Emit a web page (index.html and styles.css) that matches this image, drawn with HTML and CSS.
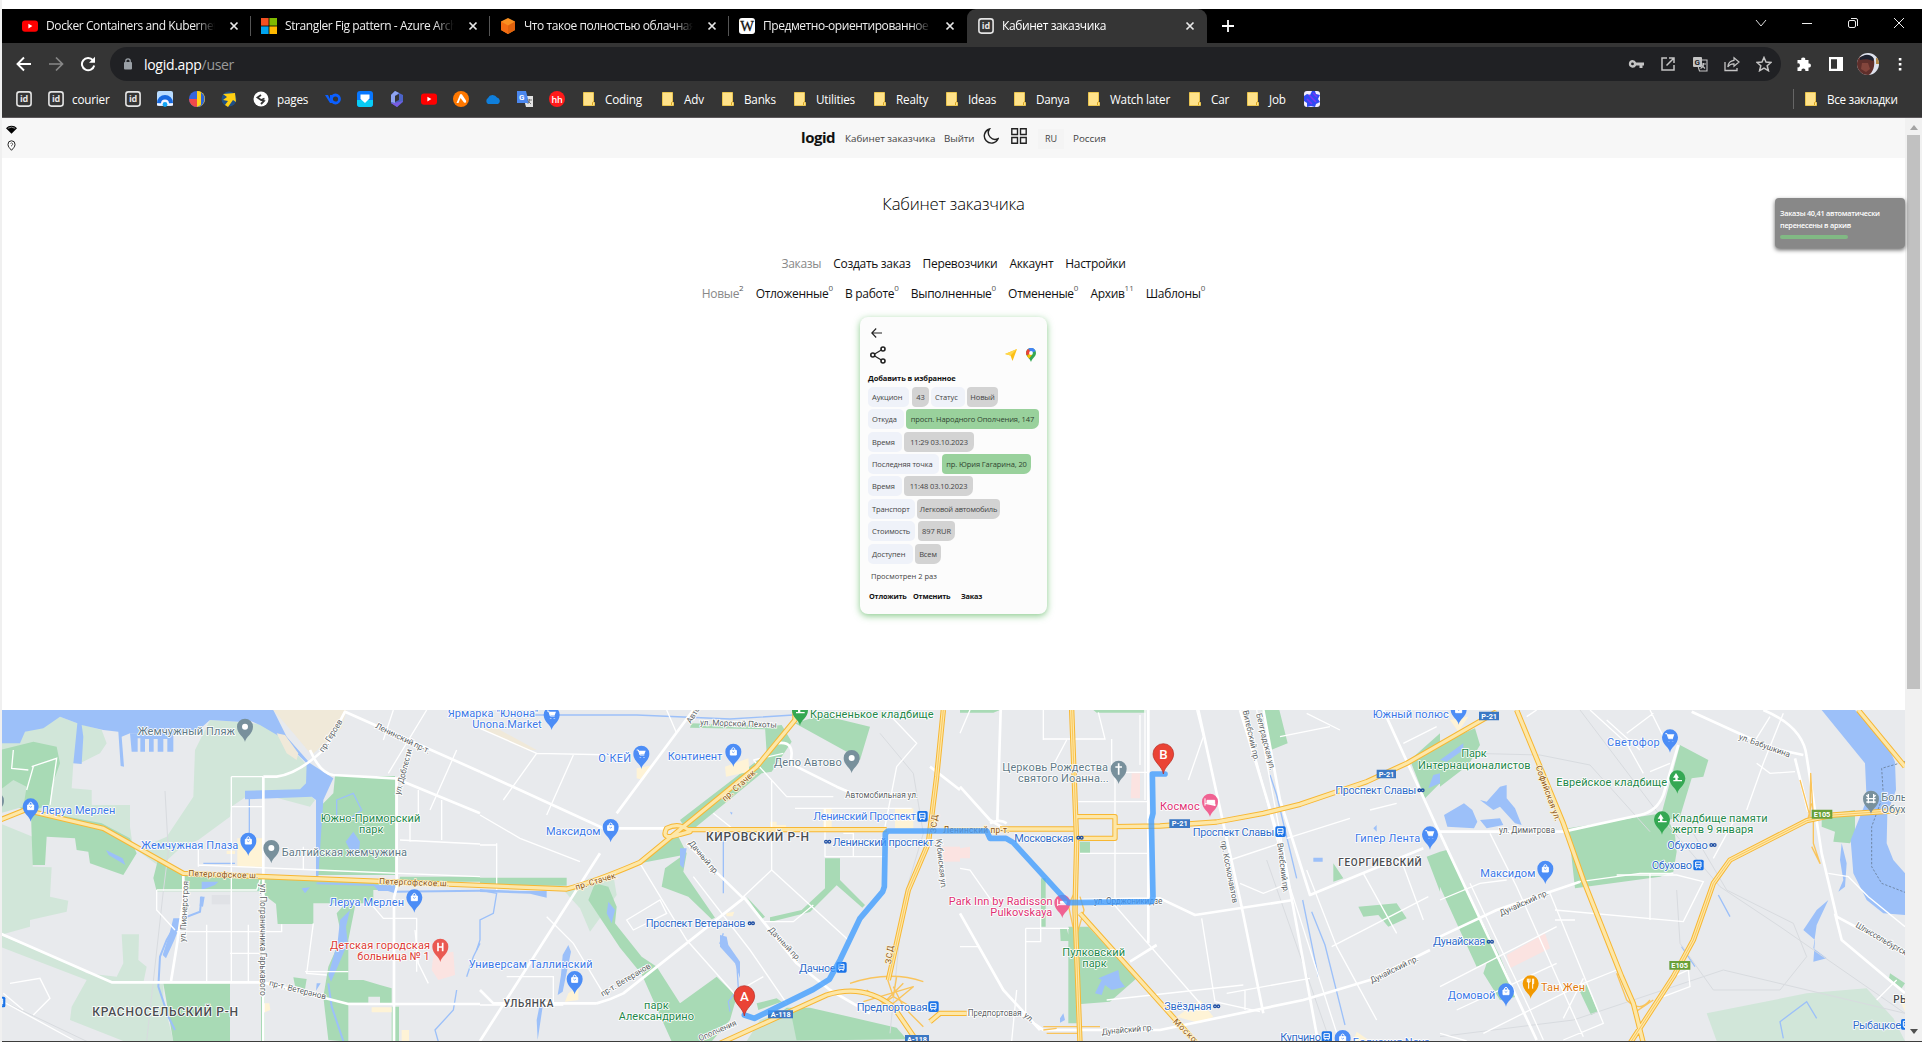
FILE: index.html
```html
<!DOCTYPE html>
<html lang="ru">
<head>
<meta charset="utf-8">
<title>Кабинет заказчика</title>
<link rel="stylesheet" href="styles.css">
</head>
<body>
<svg class="defs" aria-hidden="true">
  <defs>
    <symbol id="close" viewBox="0 0 10 10"><path d="M1.5 1.5l7 7M8.5 1.5l-7 7" stroke="#e8e8e8" stroke-width="1.7"/></symbol>
    <symbol id="idicon" viewBox="0 0 16 16"><rect x=".9" y=".9" width="14.2" height="14.2" rx="2.5" fill="none" stroke="#e4e4e4" stroke-width="1.6"/><text x="8" y="11.4" text-anchor="middle" font-family="Open Sans" font-weight="700" font-size="9" fill="#e4e4e4">id</text></symbol>
    <symbol id="folder" viewBox="0 0 12 14"><path d="M.5.5h10v9l1 1v3H.5z" fill="#ffe28a" stroke="#eac54f"/><path d="M9.5 13v-2.5l1.5-1" stroke="#d9a520" fill="none"/></symbol>
    <symbol id="yt" viewBox="0 0 16 16"><rect y="2.4" width="16" height="11.4" rx="3" fill="#f00"/><path d="M6.4 5.7v4.8l4-2.4z" fill="#fff"/></symbol>
  </defs>
</svg>

<div class="window">
<div class="tabs">
  <div class="tab"><svg class="fav"><use href="#yt"/></svg><span class="tab-title">Docker Containers and Kubernetes</span><svg class="x"><use href="#close"/></svg></div>
  <div class="tab"><svg class="fav" viewBox="0 0 16 16"><path fill="#f25022" d="M0 0h7.6v7.6H0z"/><path fill="#7fba00" d="M8.4 0H16v7.6H8.4z"/><path fill="#00a4ef" d="M0 8.4h7.6V16H0z"/><path fill="#ffb900" d="M8.4 8.4H16V16H8.4z"/></svg><span class="tab-title">Strangler Fig pattern - Azure Architecture</span><svg class="x"><use href="#close"/></svg></div>
  <div class="tab"><svg class="fav" viewBox="0 0 16 16"><path fill="#f98f20" d="M8 0l7 3.600v8.400L8 16l-7-4V3.600z"/><path fill="#f36c12" d="M1 3.600L8 7.500V16l-7-4z"/><path fill="#e0620d" d="M15 3.600L8 7.500V16l7-4z"/></svg><span class="tab-title tight">Что такое полностью облачная среда</span><svg class="x"><use href="#close"/></svg></div>
  <div class="tab last"><svg class="fav" viewBox="0 0 16 16"><rect width="16" height="16" rx="3" fill="#fff"/><text x="8" y="12.500" text-anchor="middle" font-family="Liberation Serif" font-size="14.500" fill="#111" stroke="#111" stroke-width=".3">W</text></svg><span class="tab-title tight">Предметно-ориентированное проектирование</span><svg class="x"><use href="#close"/></svg></div>
  <div class="tab active"><svg class="fav"><use href="#idicon"/></svg><span class="tab-title">Кабинет заказчика</span><svg class="x"><use href="#close"/></svg></div>
  <svg class="plus" viewBox="0 0 12 12"><path d="M6 0v12M0 6h12" stroke="#fff" stroke-width="1.800"/></svg>
  <div class="winctl">
    <svg viewBox="0 0 12 12"><path d="M1 3l5 6 5-6" fill="none" stroke="#ddd"/></svg>
    <svg viewBox="0 0 12 12"><path d="M1 6.500h10" stroke="#eee"/></svg>
    <svg viewBox="0 0 12 12"><rect x="1.500" y="3.500" width="7" height="7" rx="1.500" fill="none" stroke="#eee"/><path d="M4 1.500h5a1.500 1.500 0 0 1 1.500 1.500v6" fill="none" stroke="#eee"/></svg>
    <svg viewBox="0 0 12 12"><path d="M1 1l10 10M11 1L1 11" stroke="#eee"/></svg>
  </div>
</div>

<div class="toolbar">
  <div class="navbtns">
    <svg viewBox="0 0 16 16"><path d="M8 1.500L1.500 8 8 14.500M1.800 8H15" fill="none" stroke="#fff" stroke-width="1.900"/></svg>
    <svg viewBox="0 0 16 16"><path d="M8 1.500L14.500 8 8 14.500M14.200 8H1" fill="none" stroke="#888" stroke-width="1.700"/></svg>
    <svg viewBox="0 0 16 16"><path d="M12.900 4.100A6.200 6.200 0 1 0 14.200 9.500" fill="none" stroke="#fff" stroke-width="2"/><path d="M15 .8v6H9z" fill="#fff"/></svg>
  </div>
  <div class="omnibox">
    <svg class="lock" viewBox="0 0 8 12"><rect y="4" width="8" height="7.500" rx="1" fill="#9aa0a6"/><path d="M1.800 5V3a2.200 2.200 0 0 1 4.400 0v2" fill="none" stroke="#9aa0a6" stroke-width="1.300"/></svg>
    <span class="url">logid.app<i>/user</i></span>
    <div class="actions">
      <svg viewBox="0 0 16 16"><path fill="#c4c4c4" fill-rule="evenodd" d="M4.500 4a3.800 3.800 0 0 1 3.600 2.600H16v2.800h-1.500V12h-3V9.400H8.100A3.800 3.800 0 1 1 4.500 4zm0 2.500a1.400 1.400 0 1 0 0 2.800 1.400 1.400 0 0 0 0-2.800z"/></svg>
      <svg viewBox="0 0 16 16"><path d="M7 2H2v12h12V9M9 2h5v5M14 2L6.500 9.500" fill="none" stroke="#c4c4c4" stroke-width="1.500"/></svg>
      <svg viewBox="0 0 16 16"><rect x="1" y="1" width="9" height="10" rx="1" fill="#c4c4c4"/><path d="M10 4h5v11H7.500l-1.300-4M9 8h5M11.500 7v1c0 2-2 4-3 4.500M10 9.500l3 3" fill="none" stroke="#c4c4c4" stroke-width="1.100"/><text x="2.600" y="9" font-family="Roboto" font-weight="700" font-size="8" fill="#202124">G</text></svg>
      <svg viewBox="0 0 16 16"><path d="M1 6v8.500h12V12" fill="none" stroke="#c4c4c4" stroke-width="1.300"/><path d="M10 1.800L15 6l-5 4.200V7.800C7 7.700 5 8.800 3.800 11 4 7.500 6 4.800 10 4.300z" fill="none" stroke="#c4c4c4" stroke-width="1.200"/></svg>
      <svg viewBox="0 0 16 16"><path d="M8 1.500l2 4.600 5 .4-3.800 3.300 1.200 4.900L8 12.100l-4.400 2.600 1.200-4.900L1 6.500l5-.4z" fill="none" stroke="#c4c4c4" stroke-width="1.500"/></svg>
    </div>
  </div>
  <div class="ext">
    <svg viewBox="0 0 16 16"><path fill="#fff" d="M2 4h3.300a2 2 0 1 1 3.900 0H12.500v3.600a2 2 0 1 1 0 3.900V15H9.300a2 2 0 1 0-3.800 0H1.500v-3.700a2 2 0 1 0 0-3.900V4z"/></svg>
    <svg viewBox="0 0 16 16"><path fill="#fff" fill-rule="evenodd" d="M1 1h14v14H1zM3 3.200v9.600h6V3.200z"/></svg>
    <svg class="avatar" viewBox="0 0 22 22"><clipPath id="av"><circle cx="11" cy="11" r="11"/></clipPath><g clip-path="url(#av)"><path fill="#dfe3ee" d="M0 0h22v22H0z"/><path fill="#b48a4a" d="M19 5h3v6h-3z"/><path fill="#5f2f2b" d="M0 6c4-4 14-4 17 1 1 6-1 12-5 15H0z"/><path fill="#1e2230" d="M3 5c3-4 11-5 14 1l-1 2c-4-2-9-2-13-1z"/><path fill="#83453c" d="M5 10h6l2 6-4 3-5-3z"/></g></svg>
    <svg viewBox="0 0 16 16"><path fill="#fff" d="M6.800 2h2.600v2.600H6.800zM6.800 7h2.600v2.600H6.800zM6.800 12h2.600v2.600H6.800z"/></svg>
  </div>
</div>

<div class="bookmarks">
  <div><svg class="fav"><use href="#idicon"/></svg></div>
  <div><svg class="fav"><use href="#idicon"/></svg>courier</div>
  <div><svg class="fav"><use href="#idicon"/></svg></div>
  <div><svg class="fav" viewBox="0 0 16 16"><rect width="16" height="15" rx="2" fill="#b9dcff"/><path d="M0 12a8 8 0 0 1 16 0l-5 .5a3 3 0 0 0-6 0z" fill="#1769e0"/><path d="M8 8.500a4 4 0 0 1 4 4h4v2H0v-2h4a4 4 0 0 1 4-4z" fill="#f4f4ff"/><circle cx="8" cy="13.500" r="2.400" fill="#12a5f4"/></svg></div>
  <div><svg class="fav" viewBox="0 0 16 16"><circle cx="8" cy="8" r="8" fill="#3565dc"/><path d="M8 0a8 8 0 0 1 0 16z" fill="#ffd21a"/><path d="M12 1.500A8 8 0 0 1 8 16V9z" fill="#2b63d8"/><path d="M0 8h8v8A8 8 0 0 1 0 8z" fill="#f0494a"/><path d="M8 0v16l4-2V1z" fill="#ffd21a"/></svg></div>
  <div><svg class="fav" viewBox="0 0 16 16"><circle cx="8" cy="8" r="7.500" fill="#1f4f86"/><path d="M2 3l12-1 1 9-3-2-5 7-3-2 3-4-5-1 4-3z" fill="#ffd012"/></svg></div>
  <div><svg class="fav" viewBox="0 0 16 16"><circle cx="8" cy="8" r="7.500" fill="#fff"/><path d="M8 4L4.500 6.500 8 9l3.500-1.500M8 9l3 1-3 3" stroke="#333" stroke-width="1.800" fill="none"/></svg>pages</div>
  <div><svg class="fav" viewBox="0 0 16 16"><path d="M0 4h3l2 4V4h2v8H5z" fill="#0b5fff"/><circle cx="10.500" cy="8" r="4" fill="none" stroke="#0b5fff" stroke-width="2.800"/></svg></div>
  <div><svg class="fav" viewBox="0 0 16 16"><rect width="16" height="16" rx="3" fill="#0877ff"/><path d="M0 9h16v4a3 3 0 0 1-3 3H3a3 3 0 0 1-3-3z" fill="#08cdf5"/><path d="M3.500 3.500h9v4L8 12 3.500 8z" fill="#fff"/></svg></div>
  <div><svg class="fav" viewBox="0 0 16 16"><path d="M6 0l8 4v7l-6 5-6-4V4z" fill="#4b63c8"/><path d="M6 0l4 2-4 3v7l-4-1V4z" fill="#8fa4f0"/><path d="M6 12l8-2-6 6-6-4z" fill="#7a5be0"/><path d="M6 5l4-2v6l-4 2z" fill="#353535"/></svg></div>
  <div><svg class="fav"><use href="#yt"/></svg></div>
  <div><svg class="fav" viewBox="0 0 16 16"><circle cx="8" cy="8" r="8" fill="#ff7800"/><path d="M3.500 12L7 3.500q1-1 2 0l4 6q1 3-2 2L7.500 7 5.500 12z" fill="#fff"/></svg></div>
  <div><svg class="fav" viewBox="0 0 16 16"><path d="M3 13a3.500 3.500 0 0 1 0-6 5 5 0 0 1 9-.5A3.500 3.500 0 0 1 13 13z" fill="#0f7fdc"/></svg></div>
  <div><svg class="fav" viewBox="0 0 16 16"><path d="M6 5h10v11H9z" fill="#e3e3e3"/><path d="M0 0h9l3 12H0z" fill="#4b87ee"/><text x="2" y="9" font-family="Roboto" font-size="8" font-weight="700" fill="#fff">G</text><path d="M10 9h5M12.500 8c0 3-1 4-2 5M11 10l3 3" stroke="#777" fill="none"/></svg></div>
  <div><svg class="fav" viewBox="0 0 16 16"><circle cx="8" cy="8" r="8" fill="#ff1a1a"/><text x="8" y="11.500" text-anchor="middle" font-family="Open Sans" font-size="9" font-weight="600" fill="#fff">hh</text></svg></div>
  <div class="f"><svg class="fold"><use href="#folder"/></svg>Coding</div>
  <div class="f"><svg class="fold"><use href="#folder"/></svg>Adv</div>
  <div class="f"><svg class="fold"><use href="#folder"/></svg>Banks</div>
  <div class="f"><svg class="fold"><use href="#folder"/></svg>Utilities</div>
  <div class="f"><svg class="fold"><use href="#folder"/></svg>Realty</div>
  <div class="f"><svg class="fold"><use href="#folder"/></svg>Ideas</div>
  <div class="f"><svg class="fold"><use href="#folder"/></svg>Danya</div>
  <div class="f"><svg class="fold"><use href="#folder"/></svg>Watch later</div>
  <div class="f"><svg class="fold"><use href="#folder"/></svg>Car</div>
  <div class="f"><svg class="fold"><use href="#folder"/></svg>Job</div>
  <div><svg class="fav" viewBox="0 0 16 16"><rect width="16" height="16" rx="3" fill="#f3edff"/><path d="M0 5l3-2 3 1 2-4h3l1 3 4 1-2 4 2 3-4 2-1 3-4-1-4 1v-4l-3-2z" fill="#2f49f2"/><path d="M5 4l7 7M9 2l4 4M3 8l5 5" stroke="#7a35f5" stroke-width="1.600"/></svg></div>
  <div class="f all"><svg class="fold"><use href="#folder"/></svg>Все закладки</div>
</div>

<div class="viewport">
<main class="page">
  <header class="site">
    <div class="status">
      <svg viewBox="0 0 12 9"><path d="M0 3C3-.6 9-.6 12 3L6 9z"/><path d="M2 3.200Q6 .6 10 3.200" stroke="#ddd" fill="none" stroke-width=".7"/></svg>
      <svg class="q" viewBox="0 0 9 11"><path d="M4.500 10.300C3 8.300 1 7 1 4.300a3.500 3.500 0 0 1 7 0C8 7 6 8.300 4.500 10.300z" fill="#fff" stroke="#222"/><path d="M3.500 3.500q1-1.200 2 0T4.500 5.500v.8" fill="none" stroke="#333" stroke-width=".8"/></svg>
    </div>
    <div class="menu">
      <b class="brand">logid</b><a class="m1">Кабинет заказчика</a><a class="m2">Выйти</a>
      <svg viewBox="0 0 16 16"><path d="M6.500 1A7.200 7.200 0 1 0 15.200 10.600 6.700 6.700 0 0 1 6.500 1z" fill="none" stroke="#222" stroke-width="1.400"/></svg>
      <svg class="gr" viewBox="0 0 16 16"><path d="M.8.8h5.700v5.700H.8zM9.500.8h5.700v5.700H9.500zM.8 9.500h5.700v5.700H.8zM9.500 9.500h5.700v5.700H9.500z" fill="none" stroke="#222" stroke-width="1.400"/></svg>
      <span class="lang">RU</span><a class="m3">Россия</a>
    </div>
  </header>
  <h1>Кабинет заказчика</h1>
  <nav class="nav one"><a class="muted">Заказы</a><a>Создать заказ</a><a>Перевозчики</a><a>Аккаунт</a><a>Настройки</a></nav>
  <nav class="nav two"><a class="muted">Новые<sup>2</sup></a><a>Отложенные<sup>0</sup></a><a>В работе<sup>0</sup></a><a>Выполненные<sup>0</sup></a><a>Отмененые<sup>0</sup></a><a>Архив<sup>11</sup></a><a>Шаблоны<sup>0</sup></a></nav>

  <section class="card">
    <svg class="back" viewBox="0 0 11 10"><path d="M5.200.5L.8 5l4.400 4.500M1 5h10" fill="none" stroke="#222" stroke-width="1.100"/></svg>
    <div class="tools">
      <svg class="share" viewBox="0 0 16 18"><path d="M3 9l10-6M3 9l10 6" stroke="#222" stroke-width="1.300"/><g fill="#fff" stroke="#222" stroke-width="1.600"><circle cx="2.800" cy="9" r="2"/><circle cx="13" cy="3" r="2"/><circle cx="13" cy="15" r="2"/></g></svg>
      <svg class="yn" viewBox="0 0 12 12"><path d="M12 0L7.500 12 5.500 6.500 0 5z" fill="#fdbf16"/><path d="M12 0L5.500 6.500 0 5z" fill="#ffd84a"/></svg>
      <svg class="gm" viewBox="0 0 10 14"><clipPath id="gp"><path d="M5 14C4 10.500 0 8.500 0 5a5 5 0 0 1 10 0C10 8.500 6 10.500 5 14z"/></clipPath><g clip-path="url(#gp)"><path d="M0 0h10v14H0z" fill="#34a853"/><path d="M0 0h10v3L5 5z" fill="#4285f4"/><path d="M0 0l3 1.500L5 5 2 7H0z" fill="#ea4335"/><path d="M0 9l5-5 1 3-4 5z" fill="#fbbc04"/><path d="M3 0h7L6 4z" fill="#4285f4"/></g><circle cx="5" cy="5" r="1.900" fill="#fff"/></svg>
    </div>
    <b class="favr">Добавить в избранное</b>
    <div class="rows">
      <div class="row"><span class="k w41">Аукцион</span><span class="v w17 gap3">43</span><span class="k w34">Статус</span><span class="v w31">Новый</span></div>
      <div class="row"><span class="k w36">Откуда</span><span class="v g w133">просп. Народного Ополчения, 147</span></div>
      <div class="row"><span class="k w34">Время</span><span class="v w70">11:29 03.10.2023</span></div>
      <div class="row"><span class="k w71">Последняя точка</span><span class="v g w89 gap3">пр. Юрия Гагарина, 20</span></div>
      <div class="row"><span class="k w34">Время</span><span class="v w69">11:48 03.10.2023</span></div>
      <div class="row"><span class="k w47">Транспорт</span><span class="v w83 snug">Легковой автомобиль</span></div>
      <div class="row"><span class="k w47">Стоимость</span><span class="v w37 gap3">897 RUR</span></div>
      <div class="row"><span class="k w45">Доступен</span><span class="v w26">Всем</span></div>
    </div>
    <p class="seen">Просмотрен 2 раз</p>
    <div class="acts"><b>Отложить</b><b>Отменить</b><b>Заказ</b></div>
  </section>

  <svg class="map" viewBox="6 30 5709 993" preserveAspectRatio="none">
    <defs>
      <g id="p"><path d="M0 0C-2-16-24-24-24-46a24 24 0 1 1 48 0C24-24 2-16 0 0z"/></g>
      <g id="bag" fill="none" stroke="#fff" stroke-width="3"><path fill="#fff" d="M-9-50H9v14H-9z"/><path d="M-5-50q0-8 5-8t5 8"/><path stroke="#4285f4" stroke-width="2" d="M-4-46q4 6 8 0"/></g>
      <g id="cart" fill="none" stroke="#fff" stroke-width="3"><path d="M-14-57h5l5 15h13"/><path fill="#fff" stroke="none" d="M-8-55h21l-4 11H-4z"/><path d="M-3-35v1M8-35v1" stroke-width="5"/></g>
      <g id="tree" fill="#fff"><path d="M-4-62l9 14H1v7h13v4h-26v-4h6v-7h-7z"/></g>
      <g id="train"><rect x="-15" y="-16" width="31" height="32" rx="5" fill="#1a73e8"/><path d="M-8-9h16v15H-8z" fill="none" stroke="#fff" stroke-width="3"/><path d="M-8-1H8M-6 11l3-5M6 11L3 6" stroke="#fff" stroke-width="3"/></g>
      <g id="metro" fill="none" stroke="#1f4fa3" stroke-width="4"><circle cx="-5" cy="0" r="4"/><circle cx="5" cy="0" r="4"/></g>
    </defs>
    <rect x="0" y="0" width="5800" height="1100" fill="#e8eaed"/>

    <!-- parks, water and built areas -->
    <g>
      <path class="lp" d="M585 150L630 60 715 65 800 75 860 130 925 200 915 270 945 300 930 320 760 275 694 320 690 350 595 420 545 440 480 500 410 450 500 410 580 290z"/>
      <path class="lp" d="M0 88L75 95 180 50 232 70 305 90 320 130 300 160 240 190 220 190 215 265 275 270V315H390V380L400 450 310 400 100 350 95 330 0 300z"/>
      <path class="lp" d="M0 370l98 40v90l57 2-5 88 55 12-5 33-110 25v20L0 705z"/>
      <path class="lp" d="M0 705L230 800 260 820 350 830 370 790 365 703H417L415 780 440 800 430 848 490 850V900L520 1023H370L210 960 215 920 260 840 0 740z"/>
      <path class="pk" d="M0 150l100-25 70 15 10 50-25 70-5 55-50 15 205 40 85 45 20 45-40 65-100-35-5-35-35-5-5-35-85-5-5 85H98l-5-150-93-60z"/>
      <path class="ld" d="M0 270l40-30 40 20-10 60-70 20z"/>
      <path class="pk" d="M1005 228h180V525H950V330l50-50zM475 475l75 45 640 25 250 0v-15h-240l-10 40h-70v40l-180 0v62H833l-5-60-50-38H470l-10-40zM490 850h200v175H520zM1010 640l35-40 20 20-20 100v305l-60-5-15-130 15-90 40-90zM1045 840l45 0 50 15 35 10v45h-35v-20h-35v18h-60zM880 832l40 5-5 30-30-10zM783 890h12v133h-12zM1175 920h22v103h-22z"/>
      <path class="wt" d="M0 30H820L860 110 930 190 1000 235 970 300 962 420 955 530H948V300L935 290 735 298V272L900 268 918 250 920 190 840 110 780 75 745 60 715 65 630 60 590 95 520 105 390 100 365 110 372 200 362 198 355 95 310 90 245 75 250 110 245 192 220 190 228 110 232 70 180 50 130 85 75 95 60 130 0 130z"/>
      <path class="wt" d="M390 100h130v55h-18v-38h-12v38h-17v-38h-12v38h-14v-38h-12v38h-14v-40h-8v40h-18z"/>
      <path class="be" d="M820 30h220l-15 55-90 80-50-60zM830 100l25 5 40 55-5 20-30-20z"/>
      <path class="wl" d="M950 550l170 5 60 20 260-3M985 850l10 70 35 103M605 590l-5 45-65 25-35 60-20 50-5 90 30 90 20 40"/>
      <path class="w1" d="M1440 730l-20 40-20 60M1370 870l-10 60-55 60 10 35M610 490h95"/>
      <path class="wt" d="M1020 660l30-30-12 50 5 50-30 70-20 45-8-20 28-100zM520 655h28l-25 65-25 55-10-10 22-70zM1060 395l20 30-5 45-20-10-18-35zM1120 555h65v18h-50zM605 545h50l-10 10-40 15zM318 450l50 25 8 20-50-30zM905 565l25-3-15 18zM600 590h14l-5 30-10-2zM950 850h12l-14 22z"/>
      <path class="w1" d="M748 280v120M1010 300l50-20 25 50-40 30-35-10z"/>
      <path class="sh" d="M712 415h75v85h-75zM680 452h25v10h-25zM790 910l18 0 3 20-20 8zM1115 922h60v15h-60zM1205 990h22v33h-22z"/><path class="ho" d="M1300 765l60-10 5 70-50 15-20-30z"/>
      <path d="M635 585h55v28h-55z" fill="#e0e2e6"/>
    </g>
    <g transform="translate(1440)">
      <path class="w1" d="M90 45h380l280 12 190-12M0 570l50 10-10 60-40 20v60l-10 30M730 420v160"/>
      <path class="be" d="M0 60l60 30 110 60H140L0 85z"/>
      <path class="wt" d="M0 568l120 5 80 0v20l-50-12-150-5z"/>
      <path class="pk" d="M0 533h260v24H0zM600 360l260-200-5-80 50-5 30 50-60 90-30 5-220 180zM635 70l230 8v10l-235-5zM945 70l80-25 145 35-30 100-40-25zM480 490l110-90 30 60-10 55 95 138-10 5-70-68-80-30 10-55 55-40z"/>
      <path class="lp" d="M255 575l75-40 70-10 10 60-80 110-30-70z"/>
      <path class="pk" d="M325 600l20-50 40 10 25 60-5 50 80 100 45 30 70 110 110-80 60 60-20 70-60 70-100 28-105-235-65-80zM830 910l60-15 15 10-70 25zM1035 475h45v65l75 75-8 8-77-67-80 80-120 30v-14l95-22 70-65zM800 590l55 60-10 8zM820 1023l50-60 50-40h70l260 60 30 35z"/>
      <path class="ld" d="M840 960l90-35 20 98H800z"/>
      <path class="w1" d="M730 700l-10 30 50 55 5 80-30 40 5 30"/>
      <path class="wt" d="M265 735l8 20-25 120-15 10 10-60 5-60zM720 705l20 5 5 25 35 50 0 50-15-45-45-50zM600 445h20l-10 60-10-10zM385 605l20 25-10 40-15-30zM170 960l10-50 8 10-15 100zM750 335l8 3-4 6z"/>
      <path class="sh" d="M470 205l50-10-30 45-20-5zM735 200l70-25 3 40-70 15zM1030 325h25v60h-25zM1245 325h55v60h-55zM870 365h20v10h28v8h-48zM738 640l25-5-5 14-18 0zM265 880l30-20v40l-40 5z"/>
      <path class="ho" d="M1380 440h60v45h-60z"/>
    </g>
    <g transform="translate(2880)">
      <path class="pk" d="M0 30h120l-20 8H0zM400 30h157v8H410zM360 425h30v36h-30zM243 535h14v145h-14zM325 680h60l145 155-80 70-125 10zM300 685h20l10 38h-28zM325 900h25v70h-25zM905 30h53l25 100-50 20zM1120 490l30 45-30 10zM1195 620l115-10 30 45-55 25-30-35-45 5zM1400 470l40-15v120z"/>
      <path class="wt" d="M415 835l60-25 5 30 15 20-40 10-20-15-10 30-20-5 20-40zM1240 385l10-10v20zM1060 473h28v12h-28zM300 955l10-15 5 20-15 8z"/>
      <path class="w1" d="M930 225l20 60 60 250M1028 600l47 230M1055 635l40 100 60 240"/>
      <path class="pk" d="M1350 180l90-80v150l-45 45z"/><path class="wt" d="M1405 265l15-40 20-5v30z"/>
      <path class="ho" d="M515 220h25v75h-28zM0 445l30-5v35H0z"/><path class="sh" d="M650 950l70-50 40 50-40 20zM1190 995l40 28h-50z"/>
    </g>
    <g transform="translate(4320)">
      <path class="pk" d="M0 130l105-45 15 50-35 60L0 260zM0 455l20-5 70 140 90 180 50 120-50 10-50-80 10-30-30 10-60-130-50-110zM385 385l280-45 55-205 85 45-15 50-35 5-35 115-35 10 20 45 5 50-10 60-40 15-255 35zM415 865l25-10 33 80-20 10zM1145 345l100-15v70l-15 30-50-5 5-30-40-15zM1350 820l45 30-10 15-38-30z"/>
      <path class="lp" d="M800 940l300-60 180-15 80 90 35 68H830z"/>
      <path class="wt" d="M1145 30H1245L1340 130 1365 185 1368 270 1342 340 1340 430 1360 480 1395 520V645L1330 640 1280 600 1240 520 1232 420 1280 300 1275 190z"/>
      <path class="wt" d="M12 345l60-35 25 20 15 35-10 20-80-5zM120 300l20 5 40-45 20-5v40l25 30 20 50-20-5-45-50-20 10-20-15zM120 360l60-5 10 20-50 10zM1090 690l40-60 35-30-35 75-10 70 40 30-40 10 5-65zM1205 430l15 60-5 70-20 15 15-35-10-60zM0 180l70-50v20L20 185z"/>
      <path class="w1" d="M835 585l35 65M725 740l40 60M1030 1015l-10-50 80-60 30 50"/>
      <path class="ho" d="M200 765l115-65 15 45-120 60z"/><path class="sh" d="M30 60l55-10-30 45zM1375 890h20v45z"/>
      <path class="rv" d="M1395 185l-70 20 5 80-35 95v120l30 50 70 27"/>
    </g>

    <!-- railways -->
    <g class="rail">
      <path d="M440 1023l50-450 15-120-10-180M0 900l420 200M2640 100l100 120 30 180-60 200-40 400M3800 480l190 543M4740 30l250 330 170 200 180 120 375 260M4420 160l200 5 150 30 180 200M5080 400l100 170 200 100 40 100-80 100-200 0-100-140-10-160M4320 1010l400-50 450-150 545 130"/>
    </g>

    <!-- local streets -->
    <g class="st">
      <path d="M694 230v620M694 230h96M694 320h96M595 495l355 15 490 20M595 440v60M910 440v70M470 570h300l10-30M470 570v60l55 60M530 695h315v-22M690 760h100M620 674v175M745 674v175M940 670l-20 150 60 5M1180 30l-30 90M1280 30l-115 190M1370 150l-80 180M1325 300v120M1200 420l240 12M1255 270v80l-25 20v55M1120 620l30 35h100v160M1045 815h-130M1245 690l10 100 30 60M10 880l60 50M0 900l220 120M30 850l90-15 30 60-50 50M40 150l-5 55 50 5M95 200l75-25-20 140M100 200l-20 70"/>
    </g>
    <g class="st" transform="translate(1440)">
      <path d="M0 85l170 75 240 5M170 160L70 300M280 165l-80 180M0 345l120 70 180 70M50 430v140M0 435h50M480 490l140 230 160 180M875 240v270l-90 85M700 340l75 60M820 180l100 110h140M945 325h350M1035 325v145h180M1090 400h30v70M875 510l230 210M200 650l80 80 90 150M440 660l100-60 20 40-100 50zM640 530l170 220 110 160M780 870l70-40M80 830h140v85M0 915h250M1250 200l60-70-90-95M1215 380l35-180M850 665l90 0 60-50M560 30l30 70M820 180l90-20"/>
    </g>
    <g class="st" transform="translate(2880)">
      <path d="M30 30l-30 70M250 30v90M250 117h185l-20-80M320 120l-40 75M455 117v100h110M465 217v400l270 310M555 30v270M355 305h210M360 460h210M540 45v150M710 30l20 80-45 130M850 30l130 500 160 500M890 30l95 500M725 655l40 250 135 30M840 550l70 30 75-30M810 480l150-50M1140 90l-100-50M960 110l150-30M980 415l190-60M1040 510l90 230 120 220M1115 740l290-150M1210 520l100 180M1320 470l70 190M0 505l30 5 70 100M197 725h45v-90M197 685h130M197 685v260M0 740h60M170 870l-15 153M440 900l410-45M855 870v60M800 880l250-45M1230 330l80-20M1330 130l100-50"/>
    </g>
    <g class="st" transform="translate(4320)">
      <path d="M260 50l30-20M450 30l110 100 50 90M560 100l80-60M500 60l100 90M630 30l40 80M690 190l-60 25M0 600l120-50 80-10M90 550l180 380 40 90M150 400l80 160 200 450M330 580l160 390-120 50M0 860l350-180M50 930l300-140M130 1000l300-150 100-40M345 630l385 35 60-120-80-20h-180M630 520v140M345 660h60M430 835l-60 120M700 830l45-20 5 50-80 30M820 475l60-110M920 330l50-140 60-150M950 190l40 30 75-5M1165 520l60 10 60 60 110 90M0 1000l80 23M990 50l-50 80M1310 900l60-60"/>
    </g>

    <!-- main white streets -->
    <g class="ms">
      <path d="M790 230v793M790 230h40Q900 220 980 140L1035 35 1440 215M930 150Q960 220 1000 225l185 10 255 105M1190 232v330l-8 30v431M550 520v80l-20 140-18 110M0 700l335 147h455l255 65h395"/>
      <path d="M1440 215l370 170h190M1440 1023L1800 460M1850 340L2080 30M1790 910q40-10 80-30L2230 595 2060 430M2230 590l160 200 100 80 120 70M2330 130q60-10 40 60l140 70 70 30h80M2790 200l90 70M1440 870l40 40h310"/>
    </g>
    <g class="ms" transform="translate(2880)">
      <path d="M122 30l-10 330M0 260l90 100 50 30M90 370q30-15 50 0M715 30l130 590 65 320M565 30v700M340 600l260-5 105 50 295-45M590 735l-80 50M0 940l180 0 70 50h350l430-90 200-60 180-90M0 640l130 230 110 120M910 30l50 270 90 285 340-140M840 30l130 430 105 570M1270 30l160 350 10 20"/>
    </g>
    <g class="ms" transform="translate(4320)">
      <path d="M0 710l170-80 250-85M0 395h370l230-50q50-10 70-60l45-150M755 35l240 110 95 20M970 30q120 50 130 140l45 290 45 190 205 110M1065 175l40 160M0 400l290 620M1185 640l20 80 190 160"/>
      <path class="t" d="M420 545l180-25 100 0"/>
    </g>

    <!-- highways -->
    <g class="hx">
      <path d="M2830 30l-20 200M2550 850q120-40 220-5M2690 830l-10 60-60 40M2680 860l30 60 60 60M2600 870l50 40 60-60M2590 905l150-45-60 50M2660 830l20 60 70 40M3130 980h170M3140 1000h100M3130 990l40-5M5400 240l30 110 2-130 8 130 0 80 20 60-25-50M5435 310l-12 50M3225 575l-20 40 15 70M3240 590l12 40-20 70M4850 820l30 80M4880 900q40 40 70 0M4900 940l60-40"/>
    </g>
    <g id="roads" class="hw">
      <path d="M0 360l75-30 235 55 240 135 1150 47q80-20 220-80L2270 200 2385 60V30M2060 389h600M2040 403q-60 20-40-18 40-20 70 10zM2830 30l-20 200-25 200-60 140-60 270M2160 1030l320-145q110-35 200 35l75 110M2790 965l30-25h80M3215 30l15 400-5 200 15 400M3000 387h220M3225 350h120v65h-120M3345 380L3480 378 3650 366 3790 340 3900 313 4100 245 4220 190 4490 35M3240 640l350 390"/>
      <path d="M4550 30L4690 370 4750 540 4865 830 4900 910 4930 1030M5715 330L5500 345 5420 362 5190 480 5140 550 5080 720 5020 830 4890 1030M5575 30l140 170"/>
    </g>
    <g class="hf">
      <path d="M0 360l75-30 235 55 240 135 1150 47q80-20 220-80L2270 200 2385 60V30M2060 389h600M2040 403q-60 20-40-18 40-20 70 10zM2830 30l-20 200-25 200-60 140-60 270M2160 1030l320-145q110-35 200 35l75 110M2790 965l30-25h80M3215 30l15 400-5 200 15 400M3000 387h220M3225 350h120v65h-120M3345 380L3480 378 3650 366 3790 340 3900 313 4100 245 4220 190 4490 35M3240 640l350 390"/>
      <path d="M4550 30L4690 370 4750 540 4865 830 4900 910 4930 1030M5715 330L5500 345 5420 362 5190 480 5140 550 5080 720 5020 830 4890 1030M5575 30l140 170"/>
    </g>
    <path d="M2830 30l-20 200-25 200-60 140-60 270M3215 30l15 400-5 200 15 400M5715 330L5500 345 5420 362 5190 480 5140 550 5080 720 5020 830 4890 1030" fill="none" stroke="#f7b733" stroke-width="2"/>

    <!-- road shields -->
    <g class="shield">
      <path d="M2304 931h75v24h-75zM2715 1005h72v24h-72zM3508 358h62v26h-62zM4130 209h58v26h-58zM4437 35h60v26h-60z" fill="#3b78c4"/>
      <path d="M5435 329h62v27h-62zM5008 783h63v26h-63z" fill="#689f38"/>
      <text x="2312" y="951" textLength="60">А-118</text><text x="2721" y="1025" textLength="60">А-118</text><text x="3515" y="379" textLength="48">Р-21</text><text x="4136" y="230" textLength="47">Р-21</text><text x="4444" y="56" textLength="47">Р-21</text><text x="5441" y="351" textLength="50">E105</text><text x="5014" y="804" textLength="50">E105</text>
    </g>

    <!-- street names -->
    <g class="sn">
      <text transform="translate(970 158) rotate(-58)" textLength="110">пр. Героев</text>
      <text transform="translate(1124 83) rotate(26)" textLength="180">Ленинский пр-т.</text>
      <text transform="translate(1200 285) rotate(-75)" textLength="140">ул. Доблести</text>
      <text transform="translate(556 726) rotate(-87)" textLength="183">ул. Пионерстроя</text>
      <text transform="translate(780 552) rotate(90)" textLength="335">ул. Пограничника Гарькавого</text>
      <text transform="translate(806 856) rotate(14)" textLength="175">пр-т. Ветеранов</text>
      <text transform="translate(2072 72) rotate(-58)" textLength="55">Авто</text>
      <text transform="translate(2100 75) rotate(2)" textLength="230">ул. Морской Пехоты</text>
      <text transform="translate(2065 430) rotate(50)" textLength="125">Дачный пр.</text>
      <text transform="translate(2304 690) rotate(47)" textLength="130">Дачный пр.</text>
      <text transform="translate(1808 890) rotate(-31)" textLength="170">пр-т. Ветеранов</text>
      <text x="2536" y="295" textLength="218">Автомобильная ул.</text>
      <text transform="translate(2808 418) rotate(84)" textLength="150">Кубинская ул.</text>
      <text transform="translate(2100 1024) rotate(-24)" textLength="122">Ополчения</text>
      <text transform="translate(3728 33) rotate(77)" textLength="155">Витебский пр.</text>
      <text transform="translate(3768 42) rotate(76)" textLength="175">Белградская ул.</text>
      <text transform="translate(3662 424) rotate(79)" textLength="190">пр. Космонавтов</text>
      <text transform="translate(3832 430) rotate(83)" textLength="150">Витебский пр.</text>
      <text x="3282" y="611" textLength="205">ул. Орджоникидзе</text>
      <text x="2903" y="947" textLength="162">Предпортовая</text><text transform="translate(3070 949) rotate(40)">ул.</text>
      <text transform="translate(3306 1004) rotate(-5)" textLength="155">Дунайский пр.</text>
      <text transform="translate(4115 850) rotate(-26)" textLength="158">Дунайский пр.</text>
      <text transform="translate(4503 648) rotate(-24)" textLength="158">Дунайский пр.</text>
      <text x="4497" y="398" textLength="168">ул. Димитрова</text>
      <text transform="translate(5215 117) rotate(20)" textLength="162">ул. Бабушкина</text>
      <text transform="translate(5565 680) rotate(30)" textLength="200">Шлиссельбургский</text>
      <g class="br">
        <text transform="translate(565 528) rotate(2)" textLength="210">Петергофское ш.</text><text transform="translate(1137 552) rotate(2)" textLength="210">Петергофское ш.</text>
        <text transform="translate(1729 570) rotate(-17)" textLength="125">пр. Стачек</text><text transform="translate(2175 305) rotate(-42)" textLength="125">пр. Стачек</text>
        <text transform="translate(2808 400) rotate(-85)" textLength="55">ЗСД</text><text transform="translate(2673 793) rotate(-83)" textLength="55">ЗСД</text>
        <text x="2830" y="398" textLength="198">Ленинский пр-т.</text>
        <text transform="translate(3518 966) rotate(45)" textLength="105">Москов</text>
        <text transform="translate(4607 200) rotate(70)" textLength="175">Софийская ул.</text>
      </g>
    </g>

    <!-- place names -->
    <g class="pl">
      <text class="gy" x="413" y="105" textLength="292">Жемчужный Пляж</text>
      <text x="123" y="343" textLength="223">Леруа Мерлен</text>
      <text x="423" y="447" textLength="292">Жемчужная Плаза</text>
      <text class="gy" x="845" y="469" textLength="376">Балтийская жемчужина</text>
      <text class="gn" x="962" y="365" textLength="299">Южно-Приморский</text><text class="gn" x="1077" y="398" textLength="73">парк</text>
      <text x="988" y="618" textLength="224">Леруа Мерлен</text>
      <text class="rd" x="990" y="747" textLength="300">Детская городская</text><text class="rd" x="1072" y="781" textLength="217">больница № 1</text>
      <text x="1343" y="51" textLength="272">Ярмарка "Юнона"</text><text x="1417" y="84" textLength="208">Unona.Market</text>
      <text x="1406" y="805" textLength="372">Универсам Таллинский</text>
      <text x="1795" y="185" textLength="98">О`КЕЙ</text><text x="2003" y="180" textLength="164">Континент</text>
      <text class="gy" x="2322" y="199" textLength="203">Депо Автово</text>
      <text class="gn" x="2430" y="55" textLength="371">Красненькое кладбище</text>
      <text x="1638" y="406" textLength="163">Максидом</text>
      <text x="2440" y="360" textLength="308">Ленинский Проспект</text>
      <text class="tr" x="2498" y="437" textLength="303">Ленинский проспект</text>
      <text class="tr" x="1937" y="682" textLength="300">Проспект Ветеранов</text>
      <text class="tr" x="2397" y="816" textLength="110">Дачное</text><text class="tr" x="2570" y="933" textLength="213">Предпортовая</text>
      <text class="gn" x="1932" y="927" textLength="74">парк</text><text class="gn" x="1856" y="960" textLength="226">Александрино</text>
      <text class="gy" x="3007" y="214" textLength="317">Церковь Рождества</text><text class="gy" x="3054" y="247" textLength="272">святого Иоанна...</text>
      <text class="pn" x="3480" y="329" textLength="119">Космос</text>
      <text class="pn" x="2846" y="615" textLength="312">Park Inn by Radisson</text><text class="pn" x="2971" y="648" textLength="186">Pulkovskaya</text>
      <text class="tr" x="3043" y="425" textLength="178">Московская</text>
      <text class="tr" x="3578" y="408" textLength="245">Проспект Славы</text><text class="tr" x="4006" y="282" textLength="243">Проспект Славы</text>
      <text class="gn" x="3187" y="768" textLength="188">Пулковский</text><text class="gn" x="3247" y="802" textLength="73">парк</text>
      <text class="tr" x="3493" y="931" textLength="142">Звёздная</text><text class="tr" x="3841" y="1022" textLength="122">Купчино</text>
      <text x="4058" y="1037" textLength="232">Балкания Nova</text>
      <text x="4118" y="53" textLength="228">Южный полюс</text><text x="4065" y="427" textLength="196">Гипер Лента</text>
      <text class="gn" x="4384" y="172" textLength="76">Парк</text><text class="gn" x="4254" y="206" textLength="338">Интернационалистов</text>
      <text x="4821" y="137" textLength="158">Светофор</text>
      <text class="gn" x="4669" y="259" textLength="332">Еврейское кладбище</text>
      <text class="gn" x="5017" y="365" textLength="286">Кладбище памяти</text><text class="gn" x="5017" y="398" textLength="243">жертв 9 января</text>
      <text class="tr" x="5002" y="446" textLength="121">Обухово</text><text class="tr" x="4955" y="508" textLength="121">Обухово</text>
      <text x="4441" y="531" textLength="165">Максидом</text>
      <text class="tr" x="4299" y="736" textLength="157">Дунайская</text>
      <text x="4343" y="898" textLength="143">Домовой</text><text class="or" x="4623" y="874" textLength="132">Тан Жен</text>
      <text class="gy" x="5644" y="304">Большой</text><text class="gy" x="5644" y="338">Обуховский</text>
      <text class="tr" x="5558" y="987" textLength="145">Рыбацкое</text>
    </g>
    <g class="ds">
      <text x="277" y="948" font-size="36" textLength="437">КРАСНОСЕЛЬСКИЙ Р-Н</text>
      <text x="2118" y="423" font-size="36" textLength="309">КИРОВСКИЙ Р-Н</text>
      <text x="1511" y="922" textLength="149">УЛЬЯНКА</text><text x="4015" y="497" textLength="250">ГЕОРГИЕВСКИЙ</text><text x="5680" y="910" textLength="170">РЫБАЦКОЕ</text>
    </g>

    <!-- station marks -->
    <use href="#train" x="2767" y="349"/><use href="#train" x="2524" y="802"/><use href="#train" x="2800" y="920"/><use href="#train" x="3841" y="395"/><use href="#train" x="3980" y="1010"/><use href="#train" x="5095" y="495"/><use href="#train" x="5718" y="973"/><use href="#train" x="0" y="906"/>
    <use href="#metro" x="2483" y="425"/><use href="#metro" x="2254" y="670"/><use href="#metro" x="3240" y="413"/><use href="#metro" x="4263" y="271"/><use href="#metro" x="3650" y="919"/><use href="#metro" x="5139" y="435"/><use href="#metro" x="4471" y="725"/>

    <!-- shop, landmark and park pins -->
    <g fill="#4c8df6">
      <g transform="translate(92 365)"><use href="#p"/><use href="#bag"/></g><g transform="translate(745 468)"><use href="#p"/><use href="#bag"/></g><g transform="translate(1243 638)"><use href="#p"/><use href="#bag"/></g><g transform="translate(2200 201)"><use href="#p"/><use href="#bag"/></g><g transform="translate(1832 427)"><use href="#p"/><use href="#bag"/></g><g transform="translate(1724 883)"><use href="#p"/><use href="#bag"/></g><g transform="translate(4636 552)"><use href="#p"/><use href="#bag"/></g><g transform="translate(4518 920)"><use href="#p"/><use href="#bag"/></g><g transform="translate(4376 74)"><use href="#p"/><use href="#bag"/></g><g transform="translate(4028 1060)"><use href="#p"/><use href="#bag"/></g>
      <g transform="translate(1655 90)"><use href="#p"/><use href="#cart"/></g><g transform="translate(1924 207)"><use href="#p"/><use href="#cart"/></g><g transform="translate(4290 449)"><use href="#p"/><use href="#cart"/></g><g transform="translate(5010 158)"><use href="#p"/><use href="#cart"/></g>
    </g>
    <g fill="#78909c">
      <g transform="translate(735 126)"><use href="#p"/><circle cy="-46" r="9" fill="#fff"/></g><g transform="translate(814 490)"><use href="#p"/><circle cy="-46" r="9" fill="#fff"/></g><g transform="translate(2555 220)"><use href="#p"/><circle cy="-46" r="9" fill="#fff"/></g><g transform="translate(-12 348)"><use href="#p"/></g>
      <g transform="translate(3356 252)"><use href="#p"/><path d="M0-62v34M-10-51h20" stroke="#fff" stroke-width="5"/></g>
      <g transform="translate(5613 342)"><use href="#p"/><path d="M-8-60v28M8-60v28M-14-36h28M-14-46h28M-14-56l6 5M14-56l-6 5" fill="none" stroke="#fff" stroke-width="4"/></g>
    </g>
    <g fill="#34a853"><g transform="translate(2400 77)"><use href="#p"/><use href="#tree"/></g><g transform="translate(5032 281)"><use href="#p"/><use href="#tree"/></g><g transform="translate(4986 404)"><use href="#p"/><use href="#tree"/></g></g>
    <g transform="translate(1321 786)" fill="#ea5a52"><use href="#p"/><path d="M-7-58v26M7-58v26M-7-45H7" stroke="#fff" stroke-width="5"/></g>
    <g transform="translate(4592 896)" fill="#f29900"><use href="#p"/><path d="M-6-60v30M6-60v30M-10-60v10h8v-10M9-60v15H5" fill="none" stroke="#fff" stroke-width="3"/></g>
    <g fill="#f06292"><g transform="translate(3630 351)"><use href="#p"/><path d="M-15-56v22M-15-40h30v7M-9-50h23v8H-9z" fill="#fff" stroke="#fff" stroke-width="3"/></g><g transform="translate(3187 654)"><use href="#p"/><path d="M-14-56v20M-14-40h26M-6-50H12v6H-6z" fill="#fff" stroke="#fff" stroke-width="3"/></g></g>

    <!-- planned route and its end points -->
    <path class="route" d="M2233 945L2263 955 2440 868 2488 838 2520 780 2580 655 2648 575 2653 560 2656 400 2664 393 2960 393 2970 415 3018 415 3040 428 3190 592 3204 608 3455 605 3459 590 3454 360 3459 340 3457 222 3495 222"/>
    <g class="ab">
      <g transform="translate(2233 948)"><path d="M0 0C-3-24-31-36-31-60a31 31 0 1 1 62 0C31-36 3-24 0 0z"/><text y="-46">A</text></g>
      <g transform="translate(3490 222)"><path d="M0 0C-3-24-31-36-31-60a31 31 0 1 1 62 0C31-36 3-24 0 0z"/><text y="-46">B</text></g>
    </g>
  </svg>

  <aside class="toast"><p>Заказы 40,41 автоматически</p><p>перенесены в архив</p><div class="bar"></div></aside>
</main>
<div class="scroll"><svg viewBox="0 0 8 5"><path d="M4 0l4 5H0z" fill="#a3a3a3"/></svg><div class="thumb"></div><svg class="dn" viewBox="0 0 8 5"><path d="M4 5l4-5H0z" fill="#505050"/></svg></div>
</div>
</div>
</body>
</html>
```
FILE: styles.css
```css
* { box-sizing: border-box; }
body { margin: 0; width: 1922px; height: 1042px; overflow: hidden; background: #fff; border-left: 2px solid #f0f0f0; padding-top: 9px; font-family: "Open Sans", "Noto Sans", sans-serif; }
p, h1 { margin: 0; }
.defs { position: absolute; width: 0; height: 0; }
.window { display: flex; flex-direction: column; height: 1033px; border-bottom: 1px solid #3c3c3c; }

/* browser chrome */
.tabs { height: 34px; background: #000; display: flex; align-items: stretch; padding-left: 10px; color: #eee; font-size: 12px; flex: none; }
.tab { width: 239px; padding: 0 12px 0 10px; display: flex; align-items: center; background: linear-gradient(#555, #555) right center / 1px 20px no-repeat; }
.tab.last, .tab.active { background-image: none; }
.tab.last { width: 238px; }
.tab.active { width: 240px; background-color: #353535; border-radius: 9px 9px 0 0; padding: 0 12px 0 11px; color: #fff; }
.fav { width: 16px; height: 16px; flex: none; }
.tab-title { flex: 1; min-width: 0; margin: 0 14px 2px 8px; white-space: nowrap; overflow: hidden; letter-spacing: -.4px; -webkit-mask-image: linear-gradient(90deg, #000 88%, transparent); }
.tab-title.tight { letter-spacing: -.45px; }
.tab .x { width: 10px; height: 10px; flex: none; }
.plus { width: 12px; height: 12px; margin: 11px 0 0 15px; }
.winctl { margin: 8px 17px 0 auto; display: flex; gap: 34px; }
.winctl svg { width: 12px; height: 12px; }

.toolbar { height: 38px; background: #353535; display: flex; align-items: flex-end; flex: none; }
.navbtns { display: flex; gap: 16px; width: 108px; padding: 0 0 9px 14px; }
.navbtns svg { width: 16px; height: 16px; }
.omnibox { width: 1671px; height: 34px; border-radius: 17px; background: #202124; display: flex; align-items: center; padding-left: 14px; }
.lock { width: 8px; height: 12px; }
.url { margin-left: 12px; font-size: 14px; color: #fff; letter-spacing: -.3px; }
.url i { font-style: normal; color: #9a9a9a; }
.actions { margin: 0 9px 0 auto; display: flex; gap: 16px; }
.actions svg, .ext svg { width: 16px; height: 16px; }
.ext { display: flex; align-items: center; height: 34px; gap: 16px; padding-left: 15px; }
.ext .avatar { width: 22px; height: 22px; margin: 0 -3px; }

.bookmarks { height: 36px; background: #353535; display: grid; grid-template-columns: 32px 77px 32px 32px 32px 32px 72px 32px 32px 32px 32px 32px 32px 32px 32px 79px 60px 72px 80px 72px 68px 74px 101px 58px 59px 489px 120px; align-items: center; padding-left: 14px; color: #fff; font-size: 11.700px; letter-spacing: -.2px; flex: none; }
.bookmarks div { display: flex; align-items: center; gap: 8px; white-space: nowrap; }
.bookmarks .f { padding-left: 2px; gap: 10px; }
.bookmarks .fold { width: 12px; height: 14px; flex: none; }
.bookmarks .all { border-left: 1px solid #666; padding-left: 11px; height: 20px; letter-spacing: -.3px; }

.viewport { flex: 1; display: flex; min-height: 0; border-top: 1px solid #5c585b; }
.page { width: 1903px; position: relative; background: #fff; display: flex; flex-direction: column; align-items: center; }
.scroll { width: 17px; background: #f1f1f1; display: flex; flex-direction: column; align-items: center; padding-top: 7px; }
.scroll svg { width: 8px; height: 5px; flex: none; }
.thumb { width: 13px; height: 554px; background: #c1c1c1; margin-top: 5px; }
.scroll .dn { margin: auto 0 7px; }

/* site header */
.site { width: 1903px; height: 40px; background: #f7f7f7; display: flex; flex: none; }
.status { width: 799px; padding: 7px 0 0 4px; display: flex; flex-direction: column; }
.status svg { width: 11px; height: 9px; }
.status .q { width: 9px; height: 11px; margin: 6px 0 0 1px; }
.menu { display: flex; align-items: center; padding-top: 1px; font-size: 9.800px; color: #444; white-space: nowrap; }
.brand { width: 44px; font-size: 15px; letter-spacing: -.45px; color: #111; line-height: 20px; padding-bottom: 3px; }
.m1 { width: 99px; }
.m2 { width: 39px; letter-spacing: -.1px; }
.menu svg { width: 16px; height: 16px; margin-bottom: 5px; }
.menu .gr { margin-left: 12px; }
.lang { margin-left: 11px; width: 26px; text-align: center; background: #f4f4f4; font-size: 9px; line-height: 20px; }
.m3 { margin-left: 9px; }

h1 { font-size: 16.700px; font-weight: 300; letter-spacing: -.2px; line-height: 24px; margin-top: 34px; color: #000; }
.nav { display: flex; gap: 12px; font-size: 12px; line-height: 18px; font-weight: 400; color: #111; letter-spacing: -.3px; white-space: nowrap; }
.nav.one { margin-top: 39px; }
.nav.two { margin-top: 12px; }
.nav .muted { color: #888; }
.nav sup { font-size: 8px; line-height: 0; vertical-align: 7px; color: #555; letter-spacing: 0; }

/* order card */
.card { width: 187px; height: 297px; margin-top: 14px; background: #fcfcfc; border-radius: 8px; box-shadow: 0 2px 7px rgba(76, 175, 80, .65); padding: 11px 8px; font-size: 7.500px; color: #444; flex: none; display: flex; flex-direction: column; white-space: nowrap; }
.back { width: 11px; height: 10px; margin-left: 3px; flex: none; }
.tools { display: flex; align-items: center; margin: 8px 3px 0 2px; height: 18px; }
.share { width: 16px; height: 18px; margin-right: auto; }
.yn { width: 12px; height: 12px; margin-right: 9px; }
.gm { width: 10px; height: 14px; }
.favr { line-height: 10px; margin-top: 9px; color: #111; letter-spacing: -.1px; }
.rows { display: grid; grid-template-rows: 22px 23px 22px 22px 23px 22px 23px 22px; margin-top: 4px; }
.row { display: flex; gap: 2px; height: 20px; }
.k, .v { line-height: 20px; border-radius: 5px; text-align: center; letter-spacing: -.1px; }
.k { background: #eff2f9; text-align: left; padding-left: 4px; }
.v { background: #d3d3d3; border-radius: 4px 4px 7px 4px; }
.v.snug { letter-spacing: -.2px; }
.g { background: #99d19c; color: #2f4430; }
.gap3 { margin-left: 1px; }
.w17 { width: 17px; } .w26 { width: 26px; } .w31 { width: 31px; } .w34 { width: 34px; }
.w36 { width: 36px; } .w37 { width: 37px; } .w41 { width: 41px; } .w45 { width: 45px; }
.w47 { width: 47px; } .w69 { width: 69px; } .w70 { width: 70px; } .w71 { width: 71px; }
.w83 { width: 83px; } .w89 { width: 89px; } .w133 { width: 133px; }
.seen { margin: 5px 0 0 3px; line-height: 10px; }
.acts { display: flex; color: #111; margin: 9px 0 0 1px; line-height: 12px; font-size: 7.300px; letter-spacing: -.2px; }
.acts b { width: 44px; }
.acts b + b { width: 48px; }

.toast { position: absolute; right: 0; top: 80px; width: 130px; height: 50px; background: #888; border-radius: 4px; box-shadow: 0 2px 4px rgba(0, 0, 0, .6); padding: 9px 5px; color: #fff; font-size: 7.300px; font-weight: 600; line-height: 12px; letter-spacing: -.25px; }
.bar { width: 68px; height: 4px; border-radius: 2px; background: #81b984; margin-top: 4px; }

/* map */
.map { width: 1903px; height: 331px; margin-top: auto; flex: none; display: block; font-family: Roboto, sans-serif; }
.lp { fill: #d1e6d9; } .ld { fill: #cae3d3; } .pk { fill: #a8dab5; } .wt { fill: #9cc0f9; }
.be { fill: #f0e9d9; } .sh { fill: #fef3d6; } .ho { fill: #fbe3e1; }
.wl { fill: none; stroke: #9cc0f9; stroke-width: 6; }
.w1 { fill: none; stroke: #9cc0f9; stroke-width: 4; }
.rv { fill: none; stroke: #7088a8; stroke-width: 3; stroke-dasharray: 7 5; }
.rail { fill: none; stroke: #d8dbdf; stroke-width: 3; }
.st, .t { fill: none; stroke: #fff; stroke-width: 4; }
.ms { fill: none; stroke: #fff; stroke-width: 8; stroke-linejoin: round; }
.hx { fill: none; stroke: #f9c45c; stroke-width: 4; stroke-linejoin: round; }
.hw { fill: none; stroke: #f7b733; stroke-width: 16; stroke-linejoin: round; }
.hf { fill: none; stroke: #fde7a8; stroke-width: 10; stroke-linejoin: round; }
.route { fill: none; stroke: #3d9bff; stroke-opacity: .78; stroke-width: 17; stroke-linejoin: round; stroke-linecap: round; }
.shield { font-size: 22px; font-weight: 700; fill: #fff; }
.sn { font-size: 25px; fill: #5b5f64; stroke: #fff; stroke-width: 5; paint-order: stroke; }
.br { fill: #8a5413; stroke: #fff3d6; }
.pl { font-size: 33px; fill: #3b78e7; stroke: #fff; stroke-width: 5; paint-order: stroke; stroke-linejoin: round; }
.tr { fill: #2f6bc9; } .gy { fill: #5f7a87; } .gn { fill: #23874a; } .rd { fill: #dc3a34; } .pn { fill: #de2f72; } .or { fill: #e07a10; }
.ds { font-size: 30px; font-weight: 500; fill: #4a4d51; stroke: #fff; stroke-width: 5; paint-order: stroke; }
.ab { fill: #ea4335; stroke: #b3261e; stroke-width: 2; }
.ab text { font-size: 40px; font-weight: 500; fill: #fff; stroke: none; text-anchor: middle; }
```
